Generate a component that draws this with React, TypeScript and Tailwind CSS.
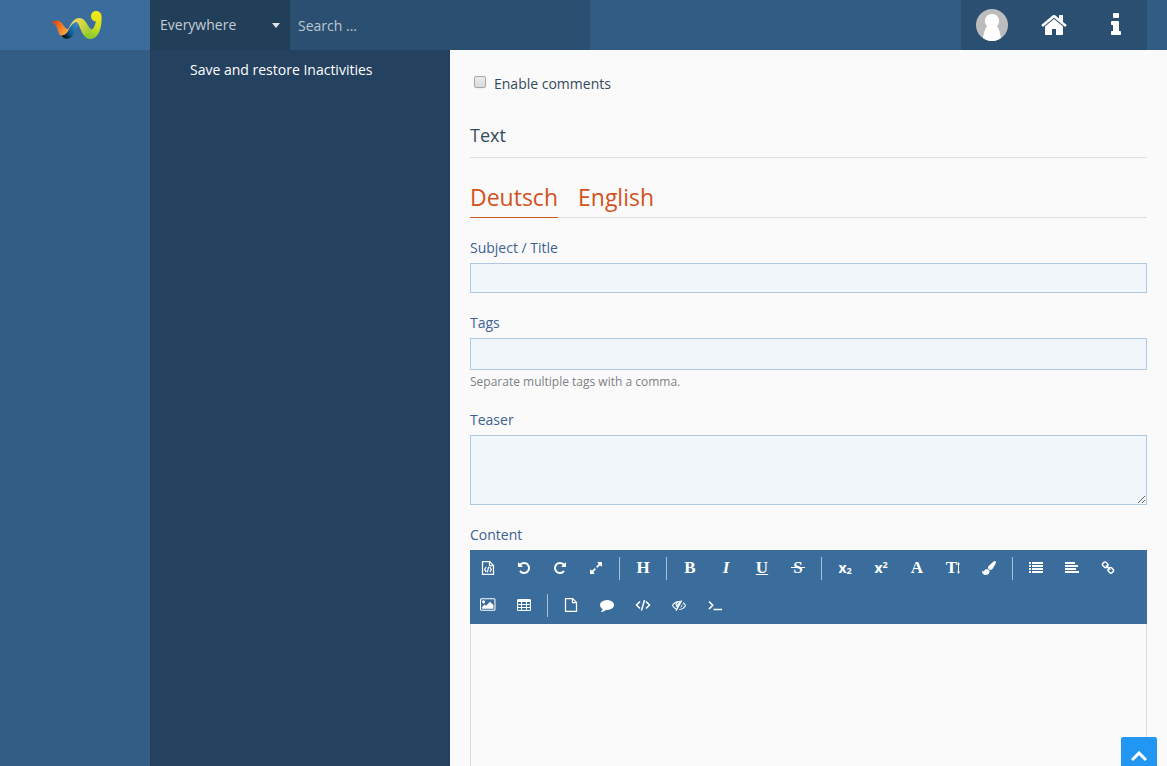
import type { ReactNode } from "react";

function Glyph({ d, className = "size-[14px]", box = "0 0 1792 1792" }: { d: string; className?: string; box?: string }) {
  return (
    <svg viewBox={box} className={className} fill="currentColor" aria-hidden="true">
      <path d={d} fillRule="evenodd" />
    </svg>
  );
}

const HOME =
  "M1472 992v480q0 26-19 45t-45 19h-384v-384h-256v384h-384q-26 0-45-19t-19-45v-480q0-1 .5-3t.5-3l575-474 575 474q1 2 1 6zm223-69l-62 74q-8 9-21 11h-3q-13 0-21-7l-692-577-692 577q-12 8-24 7-13-2-21-11l-62-74q-8-10-7-23.5t11-21.5l719-599q32-26 76-26t76 26l244 204v-195q0-14 9-23t23-9h192q14 0 23 9t9 23v408l219 182q10 8 11 21.5t-7 23.5z";
const INFO =
  "M1216 1344v128q0 26-19 45t-45 19h-512q-26 0-45-19t-19-45v-128q0-26 19-45t45-19h64v-384h-64q-26 0-45-19t-19-45v-128q0-26 19-45t45-19h384q26 0 45 19t19 45v576h64q26 0 45 19t19 45zm-128-1152v192q0 26-19 45t-45 19h-256q-26 0-45-19t-19-45v-192q0-26 19-45t45-19h256q26 0 45 19t19 45z";
const UNDO =
  "M1664 896q0 156-61 298t-164 245-245 164-298 61q-172 0-327-72.5t-264-204.5q-7-10-6.5-22.5t8.5-20.5l137-138q10-9 25-9 16 2 23 12 73 95 179 147t225 52q104 0 198.5-40.5t163.5-109.5 109.5-163.5 40.5-198.5-40.5-198.5-109.5-163.5-163.5-109.5-198.5-40.5q-98 0-188 35.5t-160 101.5l137 138q31 30 14 69-17 40-59 40h-448q-26 0-45-19t-19-45v-448q0-42 40-59 39-17 69 14l130 129q107-101 244.5-156.5t284.5-55.5q156 0 298 61t245 164 164 245 61 298z";
const EXPAND =
  "M883 1056q0 13-10 23l-332 332 144 144q19 19 19 45t-19 45-45 19h-448q-26 0-45-19t-19-45v-448q0-26 19-45t45-19 45 19l144 144 332-332q10-10 23-10t23 10l114 114q10 10 10 23zm781-864v448q0 26-19 45t-45 19-45-19l-144-144-332 332q-10 10-23 10t-23-10l-114-114q-10-10-10-23t10-23l332-332-144-144q-19-19-19-45t19-45 45-19h448q26 0 45 19t19 45z";
const LINK =
  "M1520 1216q0-40-28-68l-208-208q-28-28-68-28-42 0-72 32 3 3 19 18.5t21.5 21.5 15 19 13 25.5 3.5 27.5q0 40-28 68t-68 28q-15 0-27.5-3.5t-25.5-13-19-15-21.5-21.5-18.5-19q-33 31-33 73 0 40 28 68l206 207q27 27 68 27 40 0 68-26l147-146q28-28 28-67zm-703-705q0-40-28-68l-206-207q-28-28-68-28-39 0-68 27l-147 146q-28 28-28 67 0 40 28 68l208 208q27 27 68 27 42 0 72-31-3-3-19-18.5t-21.5-21.5-15-19-13-25.5-3.5-27.5q0-40 28-68t68-28q15 0 27.5 3.5t25.5 13 19 15 21.5 21.5 18.5 19q33-31 33-73zm895 705q0 120-85 203l-147 146q-83 83-203 83-121 0-204-85l-206-207q-83-83-83-203 0-123 88-209l-88-88q-86 88-208 88-120 0-204-84l-208-208q-84-84-84-204t85-203l147-146q83-83 203-83 121 0 204 85l206 207q83 83 83 203 0 123-88 209l88 88q86-88 208-88 120 0 204 84l208 208q84 84 84 204z";
const PICTURE =
  "M576 576q0 80-56 136t-136 56-136-56-56-136 56-136 136-56 136 56 56 136zm1024 384v448h-1408v-192l320-320 160 160 512-512zm96-704h-1600q-13 0-22.5 9.5t-9.5 22.5v1216q0 13 9.5 22.5t22.5 9.5h1600q13 0 22.5-9.5t9.5-22.5v-1216q0-13-9.5-22.5t-22.5-9.5zm160 32v1216q0 66-47 113t-113 47h-1600q-66 0-113-47t-47-113v-1216q0-66 47-113t113-47h1600q66 0 113 47t47 113z";
const COMMENT =
  "M1792 896q0 174-120 321.5t-326 233-450 85.5q-70 0-145-8-198 175-460 242-49 14-114 22-17 2-30.5-9t-17.5-29v-1q-3-4-.5-12t2-10 4.5-9.5l6-9 7-8.5 8-9q7-8 31-34.5t34.5-38 31-39.5 32.5-51 27-59 26-76q-157-89-247.5-220t-90.5-281q0-130 71-248.5t191-204.5 286-136.5 348-50.5q244 0 450 85.5t326 233 120 321.5z";
const EYE_SLASH =
  "M555 1335l78-141q-87-63-136-159t-49-203q0-121 61-225-229 117-381 353 167 258 427 375zm389-759q0-20-14-34t-34-14q-125 0-214.5 89.5t-89.5 214.5q0 20 14 34t34 14 34-14 14-34q0-86 61-147t147-61q20 0 34-14t14-34zm363-191q0 7-1 9-106 189-316 567t-315 566l-49 89q-10 16-28 16-12 0-134-70-16-10-16-28 0-12 44-87-143-65-263.5-173t-208.5-245q-20-31-20-69t20-69q153-235 380-371t496-136q89 0 180 17l54-97q10-16 28-16 5 0 18 6t31 15.5 33 18.5 31.5 18.5 19.5 11.5q16 10 16 27zm37 447q0 139-79 253.5t-209 164.5l280-502q8 45 8 84zm448 128q0 35-20 69-39 64-109 145-150 172-347.5 267t-419.5 95l74-132q212-18 392.5-137t301.5-307q-115-179-282-294l63-112q95 64 182.5 153t144.5 184q20 34 20 69z";
const BRUSH =
  "M1615 0q70 0 122.5 46.5t52.5 116.5q0 63-45 151-332 629-465 752-97 91-218 91-126 0-216.5-92.5t-90.5-219.5q0-128 92-212l638-579q59-54 130-54zm-909 1034q39 76 106.5 130t150.5 76l1 71q4 213-129.5 347t-348.5 134q-123 0-218-46.5t-152.5-127.5-86.5-183-29-220q7 5 41 30t62 44.5 59 36.5 46 17q41 0 55-37 25-66 57.5-112.5t69.5-76 88-47.5 103-25.5 125-10.5z";

function LineIcon({ d, width = 1.5 }: { d: string; width?: number }) {
  return (
    <svg viewBox="0 0 14 14" className="size-[14px] overflow-visible" fill="none" stroke="currentColor" strokeWidth={width} aria-hidden="true">
      <path d={d} />
    </svg>
  );
}

const PAGE = "M1.5.6h7.200l3.800 3.800v9h-11zM8.500.6v4h4";

function Letter({ children, extra = "" }: { children: ReactNode; extra?: string }) {
  return <span className={`font-["Liberation_Serif",serif] text-[17px] leading-5 font-bold ${extra}`}>{children}</span>;
}

function Logo() {
  return (
    <svg viewBox="0 0 52 30" className="h-[30px] w-[52px]" aria-label="WoltLab" role="img">
      <defs>
        <linearGradient id="flame" x1="0" y1="0" x2="1" y2=".6">
          <stop offset="0" stopColor="#b5402f" />
          <stop offset=".45" stopColor="#ee6a1c" />
          <stop offset="1" stopColor="#f9b04a" />
        </linearGradient>
        <linearGradient id="wave" x1="0" y1=".9" x2="1" y2="0">
          <stop offset=".1" stopColor="#08131f" />
          <stop offset=".4" stopColor="#12609e" />
          <stop offset="1" stopColor="#4aa3d4" />
        </linearGradient>
        <linearGradient id="leaf" x1="0" y1="0" x2="1" y2=".5">
          <stop offset="0" stopColor="#f3cf90" />
          <stop offset=".45" stopColor="#dcd840" />
          <stop offset="1" stopColor="#8cc63a" />
        </linearGradient>
        <linearGradient id="tip" x1=".6" y1="0" x2=".4" y2="1">
          <stop offset="0" stopColor="#f5ea14" />
          <stop offset=".5" stopColor="#d5e01d" />
          <stop offset="1" stopColor="#7dc832" />
        </linearGradient>
      </defs>
      <path d="M0 12C7 9 10 11 13 16c2 3 3 4 5 2l-1 8-4 1C8 26 8 23 6 18 5 15 3 13 0 12z" fill="url(#flame)" />
      <path d="M10 25c3 1 5-1 7-4 3-5 5-11 10-12l2 3c-3 4-4 9-7 13-3 5-9 5-12 0z" fill="url(#wave)" />
      <path d="M17 20c3-7 6-12 11-12s7 4 10 9c2 3 4 3 6-1l2 8c-4 7-10 6-14 0-3-5-4-10-6-12-4 0-6 4-9 8z" fill="url(#leaf)" />
      <path d="M40 6c0-6.500 10-7 10.500 0C51 15 49 29 39 29c-3 0-5-2-7-5 6 1 11-4 13-12.500C42 11.500 40 9 40 6z" fill="url(#tip)" />
    </svg>
  );
}

type Tool = { name: string; icon: ReactNode };

const groups: Tool[][] = [
  [
    { name: "Source", icon: <LineIcon width={1.25} d={`${PAGE}M5.200 6 3.600 8.400l1.600 2.400M8.800 6l1.600 2.400-1.600 2.400M7.700 5.600l-1.400 5.800`} /> },
    { name: "Undo", icon: <Glyph d={UNDO} /> },
    { name: "Redo", icon: <Glyph d={UNDO} className="size-[14px] -scale-x-100" /> },
    { name: "Fullscreen", icon: <Glyph d={EXPAND} /> },
  ],
  [{ name: "Heading", icon: <Letter>H</Letter> }],
  [
    { name: "Bold", icon: <Letter>B</Letter> },
    { name: "Italic", icon: <Letter extra="italic">I</Letter> },
    { name: "Underline", icon: <Letter extra="underline decoration-1 underline-offset-1">U</Letter> },
    {
      name: "Strikethrough",
      icon: (
        <span className="grid place-items-center">
          <span className="col-start-1 row-start-1 flex"><Letter>S</Letter></span>
          <span className="col-start-1 row-start-1 h-px w-[14px] bg-white" />
        </span>
      ),
    },
  ],
  [
    {
      name: "Subscript",
      icon: <span className="flex items-end text-[14px] leading-4 font-bold">x<span className="text-[9px] leading-[10px]">2</span></span>,
    },
    {
      name: "Superscript",
      icon: <span className="flex items-start text-[14px] leading-4 font-bold">x<span className="text-[9px] leading-[10px]">2</span></span>,
    },
    { name: "Colour", icon: <Letter>A</Letter> },
    {
      name: "Size",
      icon: (
        <span className="flex items-center">
          <Letter>T</Letter>
          <svg viewBox="0 0 3 12" className="h-3 w-[3px]" fill="currentColor" aria-hidden="true">
            <path d="M1.500 0 3 2.500H2v7h1L1.500 12 0 9.500h1v-7H0z" />
          </svg>
        </span>
      ),
    },
    { name: "Format", icon: <Glyph d={BRUSH} /> },
  ],
  [
    { name: "List", icon: <Glyph box="0 0 14 14" d="M0 1h2v2H0zM3 1h11v2H3zM0 4h2v2H0zM3 4h11v2H3zM0 7h2v2H0zM3 7h11v2H3zM0 10h2v2H0zM3 10h11v2H3z" /> },
    { name: "Alignment", icon: <Glyph box="0 0 14 14" d="M0 1h10v2H0zM0 4h13v2H0zM0 7h11v2H0zM0 10h14v2H0z" /> },
    { name: "Link", icon: <Glyph d={LINK} /> },
    { name: "Image", icon: <Glyph d={PICTURE} box="-64 0 1984 1792" className="h-[15px] w-4" /> },
    { name: "Table", icon: <Glyph box="0 0 14 14" d="M1 1h12l1 1v10l-1 1H1l-1-1V2zM1 4v2h3V4zM5 4v2h4V4zM10 4v2h3V4zM1 7v2h3V7zM5 7v2h4V7zM10 7v2h3V7zM1 10v2h3v-2zM5 10v2h4v-2zM10 10v2h3v-2z" /> },
  ],
  [
    { name: "Page", icon: <LineIcon width={1.25} d={PAGE} /> },
    { name: "Quote", icon: <Glyph d={COMMENT} /> },
    { name: "Code", icon: <LineIcon d="M4 3.500.500 7 4 10.500M10 3.500 13.500 7 10 10.500M8.500 2l-3 10.500" /> },
    { name: "Spoiler", icon: <Glyph d={EYE_SLASH} /> },
    { name: "Inline code", icon: <LineIcon d="M1 3.500 4.700 7.200 1 11M5.500 11.500h8.500" /> },
  ],
];

const label = "block text-sm leading-5 text-[#3d6192]";
const field = "mt-[5px] block w-full border border-[#b0c8e0] bg-[#f0f6fa] px-2 text-sm text-[#2c3e50] outline-none";

export default function App() {
  return (
    <div className="flex min-h-screen flex-col bg-[#335d85] font-['Open_Sans',sans-serif] text-sm text-[#34495a]">
      <header className="flex h-[50px] shrink-0 bg-[#325c83]">
        <a href="#home" className="flex w-[150px] items-center justify-center bg-[#3a6d9c] pl-1">
          <Logo />
        </a>
        <form className="flex" role="search">
          <div className="grid w-[140px] items-center bg-[#223f5a] text-[#c5ccd3]">
            <select aria-label="Search area" className="col-start-1 row-start-1 h-full w-full appearance-none px-[10px] text-sm outline-none">
              <option>Everywhere</option>
            </select>
            <svg viewBox="0 0 8 5" className="pointer-events-none col-start-1 row-start-1 mr-[10px] h-[5px] w-2 justify-self-end" fill="#dfe4e8" aria-hidden="true">
              <path d="M0 0h8L4 5z" />
            </svg>
          </div>
          <input type="search" aria-label="Search" placeholder="Search ..." className="w-[300px] bg-[#2b4f70] px-2 pt-[2px] text-sm text-white outline-none placeholder:text-[#bdc8d2]" />
        </form>
        <nav className="mr-5 ml-auto flex bg-[#2b4f70] text-white">
          <a href="#profile" aria-label="Profile" className="flex w-[62px] items-center justify-center">
            <svg viewBox="0 0 32 32" className="size-8" aria-hidden="true">
              <defs>
                <clipPath id="avatar"><circle cx="16" cy="16" r="16" /></clipPath>
              </defs>
              <g clipPath="url(#avatar)">
                <path d="M0 0h32v32H0z" fill="#bcbcbc" />
                <path d="M16 5a7 7 0 0 1 5 12c2 3 4 8 4 15H7c0-7 2-12 4-15A7 7 0 0 1 16 5z" fill="#fff" />
              </g>
            </svg>
          </a>
          <a href="#start" aria-label="Home" className="flex w-[62px] items-center justify-center"><Glyph d={HOME} className="size-7" /></a>
          <a href="#info" aria-label="Information" className="flex w-[62px] items-center justify-center"><Glyph d={INFO} className="size-7" /></a>
        </nav>
      </header>

      <div className="flex grow">
        <div className="w-[150px] shrink-0" />
        <aside className="w-[300px] shrink-0 bg-[#24415f] px-10 py-[10px]">
          <a href="#inactivities" className="block leading-5 text-white">Save and restore Inactivities</a>
        </aside>

        <main className="flex min-w-0 grow flex-col bg-[#fafafa] px-5 pt-6">
          <label className="flex items-center gap-2 pl-1 leading-5">
            <input type="checkbox" className="mb-1 size-3 appearance-none rounded-[2px] border border-[#a9a9a9] bg-linear-to-b from-[#ececec] to-[#d9d9d9] shadow-xs" />
            Enable comments
          </label>

          <h2 className="mt-7 border-b border-[#e0e0e0] pb-[9px] text-lg leading-[26px]">Text</h2>

          <div role="tablist" className="mt-6 flex gap-5 border-b border-[#e0e0e0] text-[23px] leading-[30px] text-[#d2521e]">
            <button type="button" role="tab" aria-selected="true" className="-mb-px border-b border-b-[#c8591f] pb-[5px]">Deutsch</button>
            <button type="button" role="tab" aria-selected="false" className="-mb-px border-b border-b-transparent pb-[5px]">English</button>
          </div>

          <div className="mt-5">
            <label htmlFor="subject" className={label}>Subject / Title</label>
            <input id="subject" type="text" className={`${field} h-[30px]`} />
          </div>

          <div className="mt-5">
            <label htmlFor="tags" className={label}>Tags</label>
            <input id="tags" type="text" className={`${field} h-8`} />
            <small className="mt-1 block text-xs leading-4 text-[#7d8287]">Separate multiple tags with a comma.</small>
          </div>

          <div className="mt-5">
            <label htmlFor="teaser" className={label}>Teaser</label>
            <textarea id="teaser" className={`${field} h-[70px] resize-y`} />
          </div>

          <div className="mt-5 flex grow flex-col">
            <label htmlFor="content" className={label}>Content</label>
            <div role="toolbar" className="mt-[5px] flex flex-wrap bg-[#3a6d9c] text-white">
              {groups.map((tools, index) => [
                index > 0 && <span key={`line-${index}`} className="mx-[5px] mt-[7px] h-[23px] w-px bg-[#a9c1d7]" />,
                ...tools.map((tool) => (
                  <button key={tool.name} type="button" aria-label={tool.name} className="flex h-[37px] w-9 items-center justify-center pb-[2px]">
                    {tool.icon}
                  </button>
                )),
              ])}
            </div>
            <textarea id="content" className="block min-h-[142px] w-full grow resize-none border-x border-[#dcdcdc] p-2 outline-none" />
          </div>
        </main>
      </div>

      <a href="#top" aria-label="Scroll to top" className="fixed right-[10px] bottom-0 flex h-[29px] w-9 justify-center rounded-t-[2px] bg-[#2196f3] pt-[14px] text-white">
        <svg viewBox="0 0 16 10" className="h-[10px] w-4" fill="none" stroke="currentColor" strokeWidth="3" aria-hidden="true">
          <path d="M1 9l7-7 7 7" />
        </svg>
      </a>
    </div>
  );
}
